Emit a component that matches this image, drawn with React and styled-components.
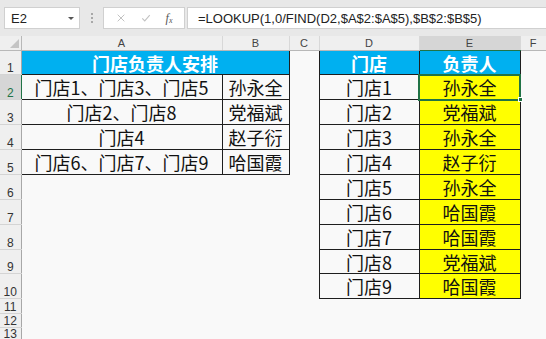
import React from "react";
import styled, { createGlobalStyle, css } from "styled-components";

const GlobalStyle = createGlobalStyle`
  html, body {
    margin: 0;
    padding: 0;
    background: #f9f9f9;
    overflow: hidden;
  }
`;

const cjk = `"Noto Sans CJK SC", "Noto Sans", sans-serif`;
const ui = `"Liberation Sans", Arial, sans-serif`;

const leftRows = [
  ["门店1、门店3、门店5", "孙永全"],
  ["门店2、门店8", "党福斌"],
  ["门店4", "赵子衍"],
  ["门店6、门店7、门店9", "哈国霞"],
];

const rightNames = ["孙永全", "党福斌", "孙永全", "赵子衍", "孙永全", "哈国霞", "哈国霞", "党福斌", "哈国霞"];

const rowHeights = [24, 25, 25, 25, 25, 25, 25, 25, 24, 25, 15, 14, 12];
const columns = [
  { key: "", w: 21 },
  { key: "A", w: 201 },
  { key: "B", w: 67 },
  { key: "C", w: 30 },
  { key: "D", w: 100 },
  { key: "E", w: 101 },
  { key: "F", w: 26 },
];

export default function App() {
  return (
    <Page>
      <GlobalStyle />
      <Toolbar>
        <NameBox>
          <span>E2</span>
          <Caret />
        </NameBox>
        <Grip>
          <i />
          <i />
          <i />
        </Grip>
        <ButtonGroup>
          <ToolIcon viewBox="0 0 12 12">
            <path d="M2 2 L10 10 M10 2 L2 10" stroke="#c2c2c2" strokeWidth="1.2" fill="none" />
          </ToolIcon>
          <ToolIcon viewBox="0 0 12 12">
            <path d="M1.5 6.5 L4.5 9.5 L10.5 2.5" stroke="#c2c2c2" strokeWidth="1.3" fill="none" />
          </ToolIcon>
          <Fx>
            f<sub>x</sub>
          </Fx>
        </ButtonGroup>
        <FormulaBox>=LOOKUP(1,0/FIND(D2,$A$2:$A$5),$B$2:$B$5)</FormulaBox>
      </Toolbar>

      <Sheet>
        <colgroup>
          {columns.map((c) => (
            <col key={c.key || "rh"} style={{ width: c.w }} />
          ))}
        </colgroup>
        <thead>
          <tr>
            <Corner>
              <CornerMark />
            </Corner>
            {columns.slice(1).map((c) => (
              <ColHead key={c.key} $active={c.key === "E"}>
                {c.key}
              </ColHead>
            ))}
          </tr>
        </thead>
        <tbody>
          {rowHeights.map((h, i) => {
            const n = i + 1;
            const left = leftRows[n - 2];
            const name = rightNames[n - 2];
            return (
              <Row key={n} $h={h}>
                <RowHead $active={n === 2}>{n}</RowHead>
                {n === 1 && (
                  <Cell colSpan={2} $fill="blue" $boxed>
                    门店负责人安排
                  </Cell>
                )}
                {left && (
                  <>
                    <Cell $boxed>{left[0]}</Cell>
                    <Cell $boxed>{left[1]}</Cell>
                  </>
                )}
                {n > 5 && (
                  <>
                    <Cell />
                    <Cell />
                  </>
                )}
                <Cell />
                {n === 1 && (
                  <>
                    <Cell $fill="blue" $boxed>门店</Cell>
                    <Cell $fill="blue" $boxed>负责人</Cell>
                  </>
                )}
                {name && (
                  <>
                    <Cell $boxed>门店{n - 1}</Cell>
                    <Cell $fill="yellow" $boxed $selected={n === 2}>
                      {name}
                    </Cell>
                  </>
                )}
                {n > 10 && (
                  <>
                    <Cell />
                    <Cell />
                  </>
                )}
                <Cell />
              </Row>
            );
          })}
        </tbody>
      </Sheet>
    </Page>
  );
}

const Page = styled.div`
  width: 546px;
  height: 339px;
  overflow: hidden;
  background: #f9f9f9;
`;

const Toolbar = styled.div`
  height: 36px;
  box-sizing: border-box;
  display: flex;
  align-items: center;
  padding: 0 0 0 4px;
  background: #e8e8e8;
`;

const NameBox = styled.div`
  width: 76px;
  height: 22px;
  box-sizing: border-box;
  background: #fff;
  border: 1px solid #d0d0d0;
  display: flex;
  align-items: center;
  justify-content: space-between;
  padding: 0 5px 0 6px;
  font-family: ${ui};
  font-size: 13px;
  color: #222;
`;

const Caret = styled.span`
  width: 0;
  height: 0;
  border-left: 3px solid transparent;
  border-right: 3px solid transparent;
  border-top: 3px solid #555;
`;

const Grip = styled.div`
  width: 23px;
  display: flex;
  flex-direction: column;
  align-items: center;
  gap: 2px;

  i {
    width: 2px;
    height: 2px;
    background: #a8a8a8;
  }
`;

const ButtonGroup = styled.div`
  width: 82px;
  height: 22px;
  box-sizing: border-box;
  background: #fff;
  border: 1px solid #d0d0d0;
  display: flex;
  align-items: center;
  justify-content: space-around;
  padding: 0 4px;
`;

const ToolIcon = styled.svg`
  width: 10px;
  height: 10px;
`;

const Fx = styled.span`
  font-family: "Liberation Serif", serif;
  font-style: italic;
  font-size: 12px;
  color: #555;
  line-height: 1;

  sub {
    font-size: 8px;
    vertical-align: -1px;
  }
`;

const FormulaBox = styled.div`
  flex: 1;
  height: 22px;
  margin-left: 2px;
  box-sizing: border-box;
  background: #fff;
  border: 1px solid #d0d0d0;
  border-right: none;
  padding-left: 10px;
  display: flex;
  align-items: center;
  font-family: ${ui};
  font-size: 13px;
  color: #222;
  white-space: nowrap;
`;

const Sheet = styled.table`
  table-layout: fixed;
  width: 546px;
  border-collapse: collapse;
  border-spacing: 0;
`;

const Corner = styled.th`
  height: 14px;
  padding: 0;
  background: #efefef;
  border-right: 1px solid #b8b8b8;
  border-bottom: 1px solid #b8b8b8;
  position: relative;
`;

const CornerMark = styled.span`
  position: absolute;
  right: 2px;
  bottom: 2px;
  width: 0;
  height: 0;
  border-left: 9px solid transparent;
  border-bottom: 9px solid #c4c4c4;
`;

const ColHead = styled.th`
  height: 14px;
  padding: 0;
  font-family: ${ui};
  font-weight: normal;
  font-size: 11px;
  line-height: 13px;
  color: #444;
  background: ${(p) => (p.$active ? "#d6d6d6" : "#efefef")};
  border-right: 1px solid #d8d8d8;
  border-bottom: 1px solid ${(p) => (p.$active ? "#217346" : "#b8b8b8")};
  text-align: center;
  overflow: hidden;
`;

const Row = styled.tr`
  height: ${(p) => p.$h}px;
`;

const RowHead = styled.th`
  padding: 0 0 0 0;
  font-family: ${ui};
  font-weight: normal;
  font-size: 12px;
  line-height: 12px;
  vertical-align: bottom;
  color: ${(p) => (p.$active ? "#217346" : "#333")};
  background: ${(p) => (p.$active ? "#d6d6d6" : "#efefef")};
  border-right: 1px solid ${(p) => (p.$active ? "#217346" : "#a8a8a8")};
  border-bottom: 1px solid #d4d4d4;
  text-align: center;
`;

const fills = {
  blue: css`
    background: #00b0f0;
    color: #fff;
    font-weight: bold;
  `,
  yellow: css`
    background: #ffff00;
  `,
};

const Cell = styled.td`
  padding: 0;
  font-family: ${cjk};
  font-size: 18px;
  line-height: 20px;
  color: #111;
  text-align: center;
  white-space: nowrap;
  overflow: visible;
  ${(p) => p.$boxed && "border: 1px solid #1e1e1e;"}
  ${(p) => fills[p.$fill]}
  ${(p) =>
    p.$selected &&
    css`
      position: relative;
      outline: 2px solid #217346;
      outline-offset: -1px;

      &::after {
        content: "";
        position: absolute;
        right: -3px;
        bottom: -3px;
        width: 5px;
        height: 5px;
        background: #217346;
        border: 1px solid #fff;
        box-sizing: border-box;
      }
    `}
`;
